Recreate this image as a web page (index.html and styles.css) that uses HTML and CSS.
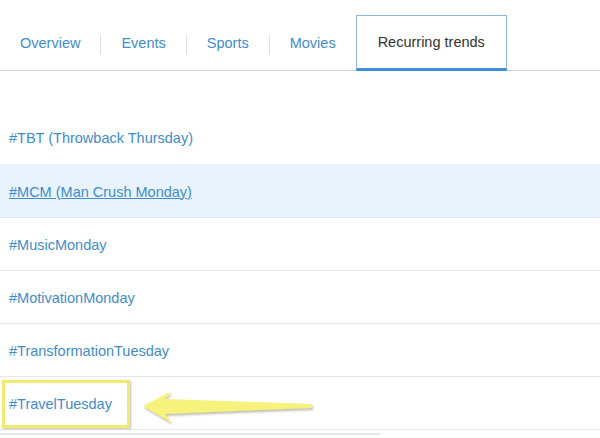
FILE: index.html
```html
<!DOCTYPE html>
<html>
<head>
<meta charset="utf-8">
<link rel="stylesheet" href="styles.css">
</head>
<body>
<nav class="tabs">
  <a class="tab">Overview</a>
  <span class="sep"></span>
  <a class="tab">Events</a>
  <span class="sep"></span>
  <a class="tab">Sports</a>
  <span class="sep"></span>
  <a class="tab">Movies</a>
  <a class="tab active">Recurring trends</a>
</nav>
<ul class="trends">
  <li class="row"><a class="link">#TBT (Throwback Thursday)</a></li>
  <li class="row hover"><a class="link">#MCM (Man Crush Monday)</a></li>
  <li class="row"><a class="link">#MusicMonday</a></li>
  <li class="row"><a class="link">#MotivationMonday</a></li>
  <li class="row"><a class="link">#TransformationTuesday</a></li>
  <li class="row marked">
    <a class="link">#TravelTuesday</a>
    <span class="callout"></span>
    <svg class="arrow" width="180" height="40" viewBox="0 0 180 40">
      <defs>
        <filter id="sh" x="-10%" y="-30%" width="120%" height="170%">
          <feDropShadow dx="1" dy="2" stdDeviation="1.2" flood-color="#8a8a70" flood-opacity="0.55"/>
        </filter>
      </defs>
      <polygon filter="url(#sh)" fill="#f6f27c" points="3,17 32,2 25,10 172,15 172,19 25,25 32,34"/>
    </svg>
  </li>
</ul>
<div class="more"></div>
</body>
</html>
```
FILE: styles.css
```css
html, body {
  margin: 0;
  padding: 0;
  background: #ffffff;
}
body {
  width: 600px;
  height: 438px;
  overflow: hidden;
  font-family: "Liberation Sans", Arial, sans-serif;
  font-size: 14.5px;
}
.tabs {
  display: flex;
  align-items: stretch;
  height: 55px;
  padding-top: 15px;
  border-bottom: 1px solid #d2d4d6;
}
.tab {
  display: flex;
  align-items: center;
  padding: 0 20px;
  color: #3f8dca;
  cursor: pointer;
}
.sep {
  width: 1px;
  height: 19px;
  align-self: center;
  margin-top: 3px;
  background: #dcdfe2;
}
.tab.active {
  color: #333333;
  padding: 0 21px;
  border: 1px solid #8fb5de;
  border-bottom: 3px solid #3b8fd9;
  margin-bottom: -1px;
  background: #ffffff;
}
.trends {
  list-style: none;
  margin: 40px 0 0 0;
  padding: 0;
}
.row {
  position: relative;
  height: 52px;
  display: flex;
  align-items: center;
  padding-left: 9px;
  padding-top: 2px;
  box-sizing: border-box;
  height: 53px;
  border-bottom: 1px solid #e6e8ea;
}
.row:first-child {
  border-bottom-color: #ffffff;
}
.row.hover {
  height: 54px;
  background: #e8f3fc;
  border-bottom-color: #dfe9f2;
}
.row.hover .link {
  text-decoration: underline;
}
.link {
  color: #3f8dca;
  cursor: pointer;
}
.callout {
  position: absolute;
  left: 2px;
  top: 3px;
  width: 122px;
  height: 42px;
  border: 3px solid #f1ea6c;
  box-shadow: 1px 1px 2px rgba(120, 120, 90, 0.45);
}
.arrow {
  position: absolute;
  left: 140px;
  top: 12px;
}
.more {
  width: 380px;
  margin-top: 3px;
  border-top: 2px solid #e4e6e8;
}
```
